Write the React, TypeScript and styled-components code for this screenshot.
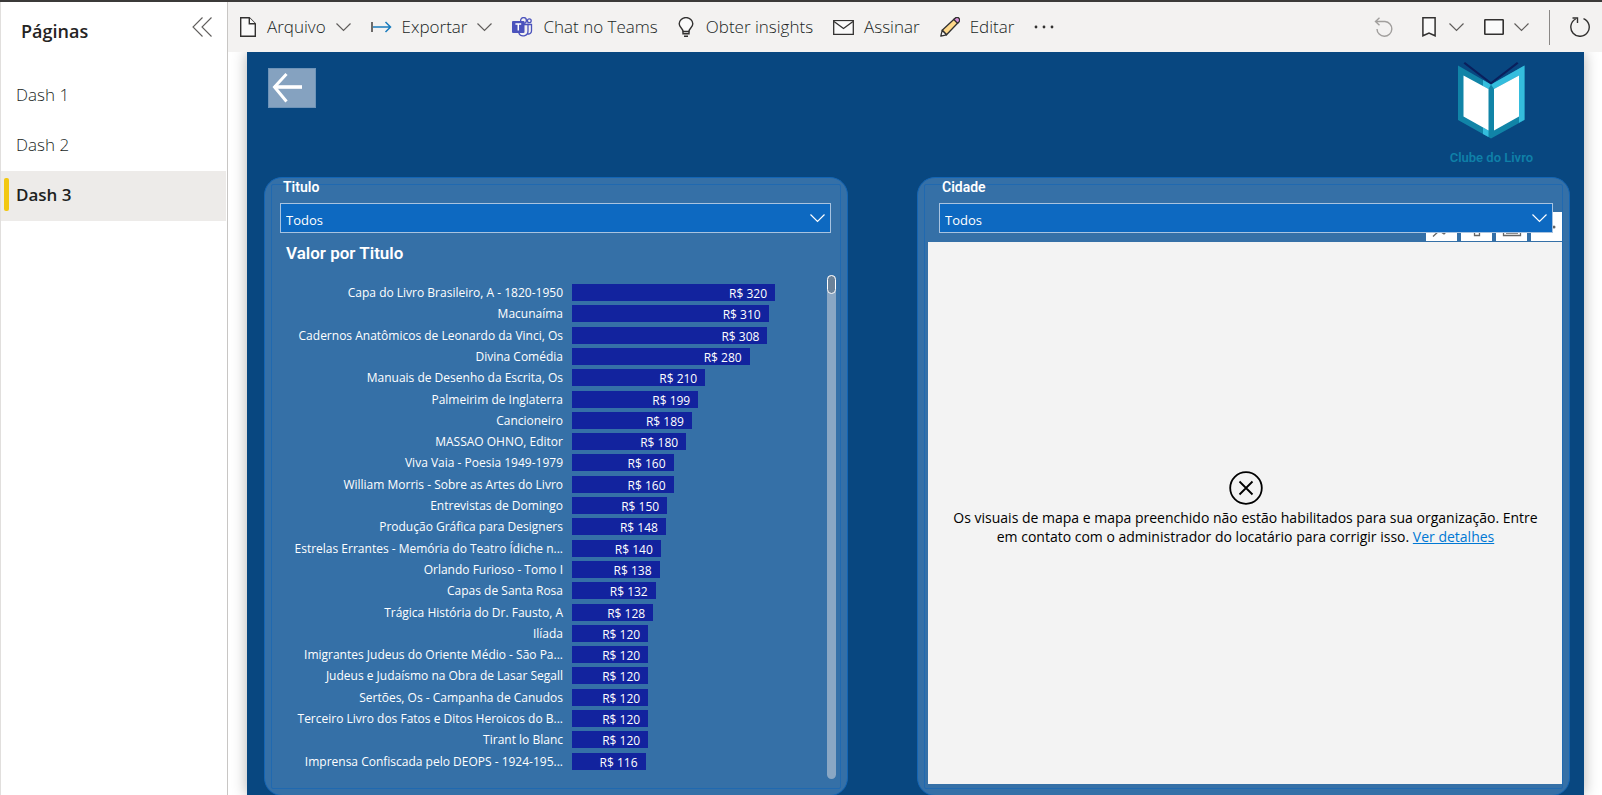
import React from 'react';
import styled, { createGlobalStyle } from 'styled-components';

const uiFont = '"Open Sans", "Noto Sans", sans-serif';
const dinFont = 'Roboto, "Liberation Sans", sans-serif';

const GlobalStyle = createGlobalStyle`
  *, *::before, *::after { box-sizing: border-box; }
  body { margin: 0; background: #fff; font-family: ${uiFont}; color: #252423; }
  button, select { font: inherit; color: inherit; }
  button { border: 0; padding: 0; background: none; cursor: pointer; }
  svg { display: block; flex: none; }
`;

const Page = styled.div`
  display: flex;
  height: 100vh;
  overflow: hidden;
  border-top: 2px solid #3b3a39;
`;

const Sidebar = styled.aside`
  flex: none;
  width: 228px;
  border-left: 1px solid #e1dfdd;
  border-right: 1px solid #c8c6c4;
`;

const SidebarHeader = styled.header`
  display: flex;
  justify-content: space-between;
  align-items: center;
  height: 50px;
  margin-bottom: 19px;
  padding: 0 15px 0 20px;
`;

const SidebarTitle = styled.h1`
  margin: 0;
  padding-top: 8px;
  font-size: 18px;
  line-height: 26px;
  font-weight: 600;
`;

const PageList = styled.nav`
  display: flex;
  flex-direction: column;
  padding-right: 1px;
`;

const PageItem = styled.button<{ $active?: boolean }>`
  display: flex;
  align-items: center;
  gap: 7px;
  height: 50px;
  padding: 0 0 4px 3px;
  font-size: 17px;
  font-weight: ${p => (p.$active ? 600 : 300)};
  color: #201f1e;
  background: ${p => (p.$active ? '#edebe9' : 'transparent')};
  &::before {
    content: '';
    width: 5px;
    height: 33px;
    border-radius: 2px;
    background: ${p => (p.$active ? '#f2c811' : 'transparent')};
  }
`;

const Main = styled.main`
  flex: 1;
  min-width: 0;
  display: flex;
  flex-direction: column;
`;

const Toolbar = styled.div`
  flex: none;
  display: flex;
  align-items: center;
  height: 50px;
  padding: 0 12px 0 11px;
  background: #f3f2f1;
`;

const ToolGroup = styled.div<{ $gap: number }>`
  display: flex;
  align-items: center;
  gap: ${p => p.$gap}px;
`;

const Spacer = styled.div`
  flex: 1;
`;

const ToolButton = styled.button<{ $gap?: number }>`
  display: flex;
  align-items: center;
  gap: ${p => p.$gap ?? 10}px;
  font-size: 17px;
  font-weight: 300;
  line-height: 24px;
  color: #201f1e;
  white-space: nowrap;
`;

const Divider = styled.div`
  width: 1px;
  height: 35px;
  background: #8a8886;
`;

const Stage = styled.div`
  flex: 1;
  min-height: 0;
  display: flex;
  padding: 0 18px 0 19px;
  overflow: hidden;
`;

const Report = styled.section`
  flex: 1;
  min-width: 0;
  display: flex;
  flex-direction: column;
  padding: 0 14px 0 17px;
  background: #084780;
  box-shadow: 0 0 14px rgba(0, 0, 0, 0.3);
`;

const ReportHeader = styled.header`
  flex: none;
  display: flex;
  justify-content: space-between;
  align-items: flex-start;
  height: 125px;
  padding: 10px 37px 0 4px;
`;

const BackButton = styled.button`
  width: 48px;
  height: 40px;
  margin-top: 6px;
  border: 1px solid #6d93b8;
  background: #85a2c0;
`;

const Brand = styled.div`
  display: flex;
  flex-direction: column;
  align-items: center;
  gap: 9px;
`;

const BrandName = styled.span`
  font-family: ${dinFont};
  font-size: 13px;
  line-height: 20px;
  font-weight: 600;
  color: #0f80a8;
`;

const Panels = styled.div`
  flex: 1;
  min-height: 0;
  display: grid;
  grid-template-columns: 584fr 653fr;
  column-gap: 69px;
  margin-bottom: -1px;
`;

const Panel = styled.section`
  position: relative;
  display: flex;
  flex-direction: column;
  min-width: 0;
  min-height: 0;
  border: 1px solid #1365b5;
  border-radius: 18px;
  background: #3570a7;
  &::before {
    content: '';
    position: absolute;
    inset: 6px;
    border: 1px solid #2069b0;
    border-radius: 2px;
    pointer-events: none;
  }
`;

const Field = styled.div<{ $inset: string }>`
  position: relative;
  z-index: 2;
  display: flex;
  flex-direction: column;
  gap: 7px;
  padding: ${p => p.$inset};
`;

const FieldLabel = styled.label`
  padding-left: 3px;
  font-family: ${dinFont};
  font-size: 14px;
  line-height: 18px;
  font-weight: 600;
  color: #fff;
`;

const SelectBox = styled.div`
  display: grid;
  align-items: center;
  > * { grid-area: 1 / 1; }
  > svg { justify-self: end; margin-right: 6px; pointer-events: none; }
`;

const Select = styled.select`
  appearance: none;
  width: 100%;
  height: 30px;
  padding: 3px 5px 0;
  border: 1px solid #a8c3e0;
  border-radius: 0;
  background: #0d69c1;
  color: #fff;
  font-size: 13px;
`;

const ChartTitle = styled.h2`
  margin: 0;
  padding: 8px 0 0 21px;
  font-family: ${dinFont};
  font-size: 17px;
  line-height: 24px;
  font-weight: 600;
  color: #fff;
`;

const ChartBody = styled.div`
  flex: 1;
  min-height: 0;
  display: flex;
  padding: 10px 11px 16px 20px;
`;

const BarList = styled.ul`
  flex: 1;
  min-width: 0;
  display: grid;
  grid-auto-rows: 1fr;
  margin: 0;
  padding: 7px 52px 7px 0;
  list-style: none;
`;

const BarRow = styled.li`
  display: grid;
  grid-template-columns: 278px minmax(0, 1fr);
  column-gap: 9px;
  align-items: center;
  min-height: 0;
  height: 21px;
  color: #fff;
  font-size: 12px;
  line-height: 17px;
`;

const BarLabel = styled.span`
  text-align: right;
  white-space: nowrap;
`;

const Bar = styled.div`
  height: 17px;
  padding: 1px 8px 0 0;
  background: #12239e;
  text-align: right;
  white-space: nowrap;
`;

const ScrollTrack = styled.div`
  flex: none;
  width: 9px;
  border-radius: 5px;
  background: #8aa7c4;
`;

const ScrollThumb = styled.div`
  height: 19px;
  border: 1px solid #fff;
  border-radius: 5px;
  background: #6b8299;
`;

const VisualActions = styled.div`
  display: flex;
  justify-content: flex-end;
  gap: 4px;
  margin: -21px 7px 1px 0;
`;

const VisualAction = styled.button`
  display: flex;
  align-items: flex-end;
  justify-content: center;
  width: 31px;
  height: 29px;
  background: #fff;
`;

const MapError = styled.div`
  flex: 1;
  display: flex;
  flex-direction: column;
  align-items: center;
  justify-content: center;
  gap: 3px;
  margin: 0 6px 11px 10px;
  background: #f3f3f3;
  color: #000;
`;

const MapMessage = styled.p`
  max-width: 600px;
  margin: 0;
  padding-bottom: 10px;
  font-size: 14px;
  line-height: 19px;
  text-align: center;
`;

const DetailsLink = styled.a`
  display: inline-block;
  color: #0078d4;
  text-decoration: underline;
`;

const Chevron = ({ color = '#605e5c' }: { color?: string }) => (
  <svg width="15" height="16" viewBox="0 0 15 16" fill="none" stroke={color} strokeWidth="1.200">
    <path d="M.5 4.500 7.500 11.500 14.500 4.500" />
  </svg>
);

const CollapseIcon = () => (
  <svg width="20" height="20" viewBox="0 0 20 20" fill="none" stroke="#605e5c" strokeWidth="1.100">
    <path d="M10.500 .5 1 10l9.500 9.500M19.500 .5 10 10l9.500 9.500" />
  </svg>
);

const FileIcon = () => (
  <svg width="18" height="20" viewBox="0 0 18 20" fill="#fafafa" stroke="#323130" strokeWidth="1.400">
    <path d="M1.700 .7h8.600l6 6v12.600H1.700z" />
    <path d="M10.300 .7v6h6" />
  </svg>
);

const ExportIcon = () => (
  <svg width="21" height="12" viewBox="0 0 21 12" fill="none">
    <path d="M1 1v10" stroke="#323130" strokeWidth="1.400" />
    <path d="M2 6h17.500M14.500 1l5 5-5 5" stroke="#1a7cbd" strokeWidth="1.500" />
  </svg>
);

const TeamsIcon = () => (
  <svg width="21" height="20" viewBox="0 0 21 20">
    <g fill="#f3f2f1" stroke="#4b53bc" strokeWidth="1.300">
      <circle cx="17.300" cy="3.800" r="1.900" />
      <path d="M15 7.500h4.500v6.500a3 3 0 0 1-4 2.800" />
      <path d="M7.500 7.500h8.500v6.500a4.800 4.800 0 0 1-9.200 2" />
      <circle cx="11.500" cy="3.500" r="2.900" />
    </g>
    <rect x="0" y="4" width="12.500" height="12" rx="1" fill="#4b53bc" />
    <path d="M3.400 7h5.800M6.300 7v6.500" stroke="#fff" strokeWidth="1.500" />
  </svg>
);

const BulbIcon = () => (
  <svg width="16" height="20" viewBox="0 0 16 20" fill="none" stroke="#323130" strokeWidth="1.400">
    <path fill="#fafafa" d="M5 14.500c0-3-3.800-4-3.800-7.700a6.800 6.200 0 0 1 13.600 0c0 3.700-3.800 4.700-3.800 7.700z" />
    <path d="M5 14.500v2.300h6v-2.300M6 19.200h4" />
  </svg>
);

const MailIcon = () => (
  <svg width="21" height="15" viewBox="0 0 21 15" fill="#fafafa" stroke="#323130" strokeWidth="1.300">
    <path d="M.7.700h19.600v13.600H.7z" />
    <path d="M1 1.500l9.500 7 9.500-7" />
  </svg>
);

const PencilIcon = () => (
  <svg width="20" height="20" viewBox="0 0 20 20" stroke="#323130" strokeWidth="1.300" strokeLinejoin="round">
    <path fill="#ffd98a" d="M2.200 13.300 14.800 1.500l3.700 3.700L6.500 17.800z" />
    <path fill="#d68fd6" d="M13.800 2.500l1.400-1.300a2.600 2.600 0 0 1 3.700 3.700l-1.400 1.300z" />
    <path fill="#fafafa" d="M2.200 13.300.8 19.200l5.700-1.400z" />
  </svg>
);

const MoreIcon = () => (
  <svg width="20" height="4" viewBox="0 0 20 4" fill="#323130">
    <circle cx="2" cy="2" r="1.400" />
    <circle cx="10" cy="2" r="1.400" />
    <circle cx="18" cy="2" r="1.400" />
  </svg>
);

const UndoIcon = () => (
  <svg width="20" height="20" viewBox="0 0 20 20" fill="none" stroke="#a19f9d" strokeWidth="1.400">
    <path d="M1.500 4.500H11a7.400 7.400 0 1 1-8 7.500M5.500 .8 1.500 4.500l4 3.800" />
  </svg>
);

const BookmarkIcon = () => (
  <svg width="14" height="20" viewBox="0 0 14 20" fill="#fafafa" stroke="#323130" strokeWidth="1.500">
    <path d="M.9.800h12.200v18L7 16 .9 18.800z" />
  </svg>
);

const ViewIcon = () => (
  <svg width="20" height="16" viewBox="0 0 20 16" fill="#fafafa" stroke="#323130" strokeWidth="1.600">
    <rect x=".8" y=".8" width="18.400" height="14.400" rx=".5" />
  </svg>
);

const RefreshIcon = () => (
  <svg width="20" height="20" viewBox="0 0 20 20" fill="none" stroke="#323130" strokeWidth="1.400">
    <path d="M13.500 1.600a9.200 9.200 0 1 1-7.800.4" />
    <path d="M2.500 1h5v5" />
  </svg>
);

const ArrowLeft = () => (
  <svg width="46" height="38" viewBox="0 0 46 38" fill="none" stroke="#fff">
    <path d="M17.500 5 5.500 18l12 14.500" strokeWidth="3" />
    <path d="M5 18h28" strokeWidth="3.600" />
  </svg>
);

const BookLogo = () => (
  <svg width="67" height="77" viewBox="0 0 67 77">
    <path d="M0 3.500 33 22.500 66.500 3.500V58L33 76.500 0 58z" fill="#1184a7" />
    <path d="M66.500 3.500 33 22.500l3 4.500 25-13.500V60.800l5.500-3z" fill="#34bddd" />
    <path d="M25 18l8 4.500-2.500 4.500-5.500-3zM25 65.500l5.500 3v6.500L25 72z" fill="#34bddd" />
    <path d="M5.500 13.500l25 13.500v41.500l-25-14zM61 13.500 36 27v41.500l25-14z" fill="#fff" />
    <path d="M5.500 1.500 7 0l26 20L59 0l1.500 1.500L33 22.500z" fill="#0a1f5c" />
  </svg>
);

const ErrorIcon = () => (
  <svg width="34" height="34" viewBox="0 0 34 34" fill="none" stroke="#000" strokeWidth="1.800">
    <circle cx="17" cy="17" r="15.800" />
    <path d="M10.500 10.500l13 13M23.500 10.500l-13 13" />
  </svg>
);

const PinGlyph = () => (
  <svg width="20" height="20" viewBox="0 0 20 20" fill="none" stroke="#666" strokeWidth="1.300">
    <path d="M1 15.500 8 9M9 11l3 2 3-3" />
  </svg>
);

const FilterGlyph = () => (
  <svg width="20" height="20" viewBox="0 0 20 20" fill="none" stroke="#666" strokeWidth="1.300">
    <path d="M2 2h16l-5.500 7v5.500h-5V9z" />
  </svg>
);

const FocusGlyph = () => (
  <svg width="20" height="20" viewBox="0 0 20 20" fill="none" stroke="#666" strokeWidth="1.300">
    <path d="M1.500 3h17v11.500h-17zM4 12h12" />
  </svg>
);

const DotsGlyph = () => (
  <svg width="20" height="29" viewBox="0 0 20 29" fill="#666">
    <circle cx="3" cy="15" r="1.500" />
    <circle cx="10" cy="15" r="1.500" />
    <circle cx="17" cy="15" r="1.500" />
  </svg>
);

const pages = ['Dash 1', 'Dash 2', 'Dash 3'];

const books: [string, number][] = [
  ['Capa do Livro Brasileiro, A - 1820-1950', 320],
  ['Macunaíma', 310],
  ['Cadernos Anatômicos de Leonardo da Vinci, Os', 308],
  ['Divina Comédia', 280],
  ['Manuais de Desenho da Escrita, Os', 210],
  ['Palmeirim de Inglaterra', 199],
  ['Cancioneiro', 189],
  ['MASSAO OHNO, Editor', 180],
  ['Viva Vaia - Poesia 1949-1979', 160],
  ['William Morris - Sobre as Artes do Livro', 160],
  ['Entrevistas de Domingo', 150],
  ['Produção Gráfica para Designers', 148],
  ['Estrelas Errantes - Memória do Teatro Ídiche n...', 140],
  ['Orlando Furioso - Tomo I', 138],
  ['Capas de Santa Rosa', 132],
  ['Trágica História do Dr. Fausto, A', 128],
  ['Ilíada', 120],
  ['Imigrantes Judeus do Oriente Médio - São Pa...', 120],
  ['Judeus e Judaísmo na Obra de Lasar Segall', 120],
  ['Sertões, Os - Campanha de Canudos', 120],
  ['Terceiro Livro dos Fatos e Ditos Heroicos do B...', 120],
  ['Tirant lo Blanc', 120],
  ['Imprensa Confiscada pelo DEOPS - 1924-195...', 116],
];

const maxValue = 320;

const Slicer = ({ id, label, inset }: { id: string; label: string; inset: string }) => (
  <Field $inset={inset}>
    <FieldLabel htmlFor={id}>{label}</FieldLabel>
    <SelectBox>
      <Select id={id}>
        <option>Todos</option>
      </Select>
      <Chevron color="#fff" />
    </SelectBox>
  </Field>
);

export default function App() {
  return (
    <>
      <GlobalStyle />
      <Page>
        <Sidebar>
          <SidebarHeader>
            <SidebarTitle>Páginas</SidebarTitle>
            <button aria-label="Recolher"><CollapseIcon /></button>
          </SidebarHeader>
          <PageList>
            {pages.map(name => (
              <PageItem key={name} $active={name === 'Dash 3'}>{name}</PageItem>
            ))}
          </PageList>
        </Sidebar>
        <Main>
          <Toolbar>
            <ToolGroup $gap={20}>
              <ToolButton><FileIcon />Arquivo<Chevron /></ToolButton>
              <ToolButton><ExportIcon />Exportar<Chevron /></ToolButton>
              <ToolButton><TeamsIcon />Chat no Teams</ToolButton>
              <ToolButton $gap={12}><BulbIcon />Obter insights</ToolButton>
              <ToolButton><MailIcon />Assinar</ToolButton>
              <ToolButton><PencilIcon />Editar</ToolButton>
              <ToolButton aria-label="Mais opções"><MoreIcon /></ToolButton>
            </ToolGroup>
            <Spacer />
            <ToolGroup $gap={28}>
              <ToolButton aria-label="Redefinir"><UndoIcon /></ToolButton>
              <ToolGroup $gap={20}>
                <ToolButton $gap={13} aria-label="Indicadores"><BookmarkIcon /><Chevron /></ToolButton>
                <ToolButton aria-label="Exibir"><ViewIcon /><Chevron /></ToolButton>
                <Divider />
                <ToolButton aria-label="Atualizar"><RefreshIcon /></ToolButton>
              </ToolGroup>
            </ToolGroup>
          </Toolbar>
          <Stage>
            <Report>
              <ReportHeader>
                <BackButton aria-label="Voltar"><ArrowLeft /></BackButton>
                <Brand>
                  <BookLogo />
                  <BrandName>Clube do Livro</BrandName>
                </Brand>
              </ReportHeader>
              <Panels>
                <Panel>
                  <Slicer id="titulo" label="Titulo" inset="0 16px 0 15px" />
                  <ChartTitle>Valor por Titulo</ChartTitle>
                  <ChartBody>
                    <BarList>
                      {books.map(([title, value]) => (
                        <BarRow key={title}>
                          <BarLabel>{title}</BarLabel>
                          <Bar style={{ width: `${(value / maxValue) * 100}%` }}>R$ {value}</Bar>
                        </BarRow>
                      ))}
                    </BarList>
                    <ScrollTrack><ScrollThumb /></ScrollTrack>
                  </ChartBody>
                </Panel>
                <Panel>
                  <Slicer id="cidade" label="Cidade" inset="0 16px 0 21px" />
                  <VisualActions>
                    <VisualAction aria-label="Fixar"><PinGlyph /></VisualAction>
                    <VisualAction aria-label="Filtros"><FilterGlyph /></VisualAction>
                    <VisualAction aria-label="Modo de foco"><FocusGlyph /></VisualAction>
                    <VisualAction aria-label="Mais opções do visual"><DotsGlyph /></VisualAction>
                  </VisualActions>
                  <MapError>
                    <ErrorIcon />
                    <MapMessage>
                      Os visuais de mapa e mapa preenchido não estão habilitados para sua organização. Entre
                      em contato com o administrador do locatário para corrigir isso. <DetailsLink href="#">Ver detalhes</DetailsLink>
                    </MapMessage>
                  </MapError>
                </Panel>
              </Panels>
            </Report>
          </Stage>
        </Main>
      </Page>
    </>
  );
}
